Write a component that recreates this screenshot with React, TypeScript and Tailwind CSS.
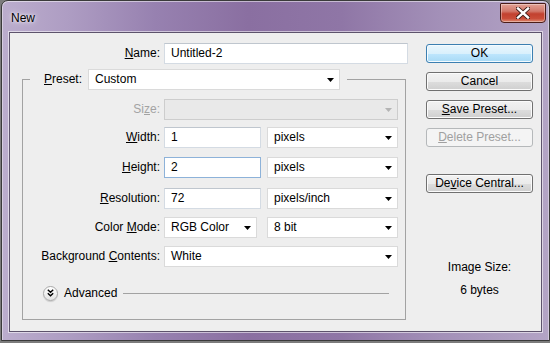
import React from "react";

const font = { fontFamily: '"Liberation Sans", Arial, sans-serif' };

function Arrow({ disabled }: { disabled?: boolean }) {
  return (
    <svg width="7" height="4" viewBox="0 0 7 4" className="shrink-0 mt-[1px]">
      <polygon points="0,0 7,0 3.5,4" fill={disabled ? "#b4b4b4" : "#000"} />
    </svg>
  );
}

function Select({ w, text, disabled }: { w: string; text?: string; disabled?: boolean }) {
  return (
    <div
      className={`${w} h-[21px] flex items-center justify-between pl-[6px] pr-[5px] border ${
        disabled ? "bg-[#e9e9e9] border-[#cdcdcd]" : "bg-white border-[#dadada]"
      }`}
    >
      <span className="leading-[15px] whitespace-nowrap">{text}</span>
      <Arrow disabled={disabled} />
    </div>
  );
}

function Input({ w, text, focus }: { w: string; text: string; focus?: boolean }) {
  return (
    <div
      className={`${w} h-[21px] flex items-center pl-[6px] bg-white border ${
        focus ? "border-[#8db2d9]" : "border-[#d4dbe3] border-t-[#bfc6ce]"
      }`}
    >
      <span className="leading-[15px] whitespace-nowrap">{text}</span>
    </div>
  );
}

function Label({ children, disabled, w = "w-[141px]" }: { children: React.ReactNode; disabled?: boolean; w?: string }) {
  return (
    <div className={`${w} shrink-0 text-right pr-[4px] leading-[15px] whitespace-nowrap ${disabled ? "text-[#a3a3a3]" : "text-black"}`}>
      {children}
    </div>
  );
}

function Btn({ children, primary, disabled, mt }: { children: React.ReactNode; primary?: boolean; disabled?: boolean; mt: string }) {
  let cls =
    "border-[#707070] bg-[linear-gradient(#f2f2f2_0%,#ebebeb_50%,#dddddd_51%,#cfcfcf_100%)] text-black shadow-[inset_0_0_0_1px_#fbfbfb]";
  if (primary)
    cls =
      "border-[#3c7fb1] bg-[linear-gradient(#eaf6fd_0%,#d9f0fc_50%,#bee6fd_51%,#a7d9f5_100%)] text-black shadow-[inset_0_0_0_1px_#f4fbff]";
  if (disabled) cls = "border-[#b5b8ba] bg-[#f4f4f4] text-[#a0a0a0]";
  return (
    <div
      className={`${mt} w-[107px] h-[19px] rounded-[3px] border flex items-center justify-center leading-[15px] whitespace-nowrap ${cls}`}
    >
      {children}
    </div>
  );
}

export default function App() {
  return (
    <div className="w-[550px] h-[343px] bg-[#7c7c7c] overflow-hidden text-[12px]" style={font}>
      <div className="ml-[1px] w-[549px] h-[341px] rounded-t-[7px] border border-[#3a3a3a] bg-[linear-gradient(90deg,#bbadcd_0%,#ae9dc3_12%,#9781b0_28%,#8a6fa1_45%,#8f76a6_62%,#a390b8_80%,#b3a4c5_100%)] shadow-[inset_0_1px_0_rgba(255,255,255,0.5),inset_1px_0_0_rgba(255,255,255,0.4),inset_-1px_0_0_rgba(255,255,255,0.4)] flex flex-col">
        {/* title bar */}
        <div className="h-[31px] flex justify-between items-start shrink-0">
          <div className="pl-[9px] pt-[10px] leading-[15px] text-black [text-shadow:0_0_6px_rgba(255,255,255,0.9),0_0_3px_rgba(255,255,255,0.8)]">
            New
          </div>
          <div className="mr-[3px] mt-[2px] w-[46px] h-[20px] rounded-b-[4px] rounded-t-[1px] border border-[#4b1d18] bg-[linear-gradient(#e3a195_0%,#d2786a_40%,#c2412f_55%,#c94c38_80%,#de8a72_100%)] shadow-[inset_0_0_0_1px_rgba(255,255,255,0.35)] flex items-center justify-center">
            <svg width="14" height="12" viewBox="0 0 14 12">
              <path d="M2 1.5 L12 10.5 M12 1.5 L2 10.5" stroke="#3a1a16" strokeWidth="4.2" strokeLinecap="square" />
              <path d="M2 1.5 L12 10.5 M12 1.5 L2 10.5" stroke="#ffffff" strokeWidth="2.4" strokeLinecap="square" />
            </svg>
          </div>
        </div>
        {/* client */}
        <div className="ml-[7px] w-[533px] h-[300px] border border-[#5d536c] shadow-[0_0_0_1px_rgba(255,255,255,0.55)] bg-[#eeeeee] pl-[12px] pt-[10px] flex items-start">
          {/* left column */}
          <div className="w-[387px] shrink-0 flex flex-col">
            <div className="flex items-center">
              <Label w="w-[142px]">
                <u>N</u>ame:
              </Label>
              <Input w="w-[244px]" text="Untitled-2" />
            </div>
            <fieldset className="mt-[5px] w-[384px] border border-[#a2a2a2] pb-[18px]">
              <legend className="ml-[7px] pl-[14px] pr-[7px]">
                <div className="flex items-center">
                  <span className="leading-[15px] mr-[6px]">
                    <u>P</u>reset:
                  </span>
                  <Select w="w-[252px]" text="Custom" />
                </div>
              </legend>
              <div className="mt-[9px] flex items-center">
                <Label disabled>
                  Si<u>z</u>e:
                </Label>
                <Select w="w-[234px]" disabled />
              </div>
              <div className="mt-[7px] flex items-center">
                <Label>
                  <u>W</u>idth:
                </Label>
                <Input w="w-[97px]" text="1" />
                <div className="ml-[6px]">
                  <Select w="w-[131px]" text="pixels" />
                </div>
              </div>
              <div className="mt-[9px] flex items-center">
                <Label>
                  <u>H</u>eight:
                </Label>
                <Input w="w-[97px]" text="2" focus />
                <div className="ml-[6px]">
                  <Select w="w-[131px]" text="pixels" />
                </div>
              </div>
              <div className="mt-[10px] flex items-center">
                <Label>
                  <u>R</u>esolution:
                </Label>
                <Input w="w-[97px]" text="72" />
                <div className="ml-[6px]">
                  <Select w="w-[131px]" text="pixels/inch" />
                </div>
              </div>
              <div className="mt-[8px] flex items-center">
                <Label>
                  Color <u>M</u>ode:
                </Label>
                <Select w="w-[93px]" text="RGB Color" />
                <div className="ml-[10px]">
                  <Select w="w-[131px]" text="8 bit" />
                </div>
              </div>
              <div className="mt-[8px] flex items-center">
                <Label>
                  Background <u>C</u>ontents:
                </Label>
                <Select w="w-[234px]" text="White" />
              </div>
              <div className="mt-[18px] h-[16px] flex items-center pl-[20px] pr-[16px]">
                <div className="w-[15px] h-[15px] rounded-full border border-[#a9a9a9] bg-[linear-gradient(#ffffff,#e4e4e4)] shadow-[0_1px_1px_rgba(0,0,0,0.15)] flex items-center justify-center">
                  <svg width="7" height="8" viewBox="0 0 7 8">
                    <path d="M0.8 0.8 L3.5 3.3 L6.2 0.8 M0.8 4.3 L3.5 6.8 L6.2 4.3" stroke="#000" strokeWidth="1.4" fill="none" />
                  </svg>
                </div>
                <span className="ml-[6px] leading-[15px]">Advanced</span>
                <div className="ml-[6px] flex-1 h-px bg-[#a2a2a2]" />
              </div>
            </fieldset>
          </div>
          {/* right column */}
          <div className="ml-[17px] w-[107px] flex flex-col items-center">
            <Btn primary mt="mt-[1px]">OK</Btn>
            <Btn mt="mt-[9px]">Cancel</Btn>
            <Btn mt="mt-[9px]">
              <span>
                <u>S</u>ave Preset...
              </span>
            </Btn>
            <Btn disabled mt="mt-[9px]">
              <span>
                <u>D</u>elete Preset...
              </span>
            </Btn>
            <Btn mt="mt-[27px]">
              <span>
                De<u>v</u>ice Central...
              </span>
            </Btn>
            <div className="mt-[67px] leading-[15px]">Image Size:</div>
            <div className="mt-[8px] leading-[15px]">6 bytes</div>
          </div>
        </div>
      </div>
    </div>
  );
}
